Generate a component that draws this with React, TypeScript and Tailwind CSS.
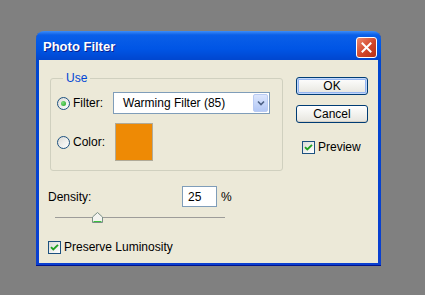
import React from 'react';

const font = { fontFamily: '"Liberation Sans", Arial, sans-serif' };

function Radio({ checked }: { checked?: boolean }) {
  return (
    <span className="grid h-[13px] w-[13px] place-items-center rounded-full border border-[#1C5180] bg-gradient-to-br from-[#DCDCD7] to-white">
      {checked && (
        <span className="h-[5px] w-[5px] rounded-full bg-[radial-gradient(circle_at_35%_35%,#7BE07B,#21A121)]" />
      )}
    </span>
  );
}

function Check() {
  return (
    <span className="grid h-[13px] w-[13px] place-items-center border border-[#1C5180] bg-gradient-to-br from-[#DCDCD7] to-white">
      <svg width="9" height="9" viewBox="0 0 9 9">
        <path d="M1 4.2 L3.3 6.5 L8 1.8" fill="none" stroke="#21A121" strokeWidth="1.9" />
      </svg>
    </span>
  );
}

function XpButton({ label, isDefault }: { label: string; isDefault?: boolean }) {
  return (
    <button
      className={
        'h-[18px] w-[72px] rounded-[3px] border border-[#003C74] bg-gradient-to-b from-white to-[#E6E5DE] text-[12px] leading-[16px] text-black ' +
        (isDefault ? 'shadow-[inset_0_0_0_1px_#C1D7FB,inset_0_0_0_2px_#94B5F0]' : 'shadow-[inset_0_-1px_0_#D6D0C5]')
      }
    >
      {label}
    </button>
  );
}

export default function App() {
  return (
    <div className="h-[295px] w-[425px] overflow-hidden bg-[#808080] pl-[36px] pt-[31px]" style={font}>
      <div className="flex h-[235px] w-[345px] flex-col rounded-t-[8px] bg-[linear-gradient(to_bottom,#3C8DF8_0px,#0A5FE8_4px,#0055E5_18px,#0046CF_29px,#0A3FD0_100%)] shadow-[inset_0_-1px_0_#00138C]">
        {/* title bar */}
        <div className="flex h-[29px] shrink-0 items-center justify-between pl-[7px] pr-[4px] pt-[3px]">
          <span className="text-[13px] font-bold text-white [text-shadow:1px_1px_0_#0A1E8C]">Photo Filter</span>
          <span className="grid h-[21px] w-[21px] place-items-center rounded-[3px] border border-white bg-[linear-gradient(135deg,#EE8A6E,#D2462A_55%,#B73116)]">
            <svg width="11" height="11" viewBox="0 0 11 11">
              <path d="M1.5 1.5 L9.5 9.5 M9.5 1.5 L1.5 9.5" stroke="white" strokeWidth="2" strokeLinecap="square" />
            </svg>
          </span>
        </div>

        {/* client area */}
        <div className="mx-[3px] mb-[3px] flex flex-1 bg-[#ECE9D8] text-[12px] text-black">
          <div className="flex w-[243px] flex-col pl-[9px]">
            <fieldset className="ml-[2px] mt-[11px] w-[233px] rounded-[3px] border border-[#D0D0BF] px-[6px] pb-[9px] pt-[7px]">
              <legend className="ml-[6px] px-[3px] leading-[14px] text-[#0046D5]">Use</legend>
              <div className="flex items-center">
                <Radio checked />
                <span className="ml-[3px] w-[40px]">Filter:</span>
                <div className="flex h-[22px] w-[157px] items-center border border-[#7F9DB9] bg-white p-[1px]">
                  <span className="flex-1 pl-[8px]">Warming Filter (85)</span>
                  <span className="grid h-[18px] w-[15px] place-items-center rounded-[2px] border border-[#B9CBF3] bg-gradient-to-b from-[#DCE6FD] to-[#B3C8F5]">
                    <svg width="8" height="6" viewBox="0 0 8 6">
                      <path d="M1 1.5 L4 4.5 L7 1.5" fill="none" stroke="#4D6185" strokeWidth="1.6" />
                    </svg>
                  </span>
                </div>
              </div>
              <div className="mt-[9px] flex items-center">
                <Radio />
                <span className="ml-[3px] w-[42px]">Color:</span>
                <span className="h-[38px] w-[38px] border border-[#B0AA98] bg-[#EE8A05]" />
              </div>
            </fieldset>

            <div className="mt-[15px] flex items-center">
              <span className="w-[134px]">Density:</span>
              <span className="flex h-[21px] w-[35px] items-center border border-[#7F9DB9] bg-white pl-[5px]">25</span>
              <span className="ml-[4px]">%</span>
            </div>

            <div className="relative ml-[7px] mt-[5px] h-[11px] w-[170px]">
              <div className="mt-[5px] h-[2px] border-t border-[#9D9C99] border-b-white" />
              <svg className="absolute left-[37px] top-0" width="11" height="11" viewBox="0 0 11 11">
                <path d="M5.5 0.5 L10.5 5 L10.5 10.5 L0.5 10.5 L0.5 5 Z" fill="#F4F4F0" stroke="#7B8F86" />
                <path d="M1.5 9.5 L9.5 9.5" stroke="#3CC03C" />
              </svg>
            </div>

            <div className="mt-[15px] flex items-center">
              <Check />
              <span className="ml-[3px]">Preserve Luminosity</span>
            </div>
          </div>

          <div className="flex flex-col pl-[14px] pt-[17px]">
            <XpButton label="OK" isDefault />
            <div className="mt-[10px]">
              <XpButton label="Cancel" />
            </div>
            <div className="ml-[6px] mt-[15px] flex items-center">
              <Check />
              <span className="ml-[3px]">Preview</span>
            </div>
          </div>
        </div>
      </div>
    </div>
  );
}
